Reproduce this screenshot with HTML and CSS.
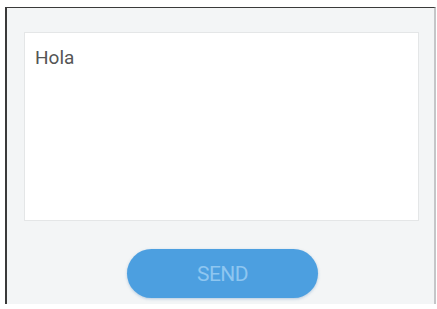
FILE: index.html
```html
<!DOCTYPE html>
<html>
<head>
<meta charset="utf-8">
<link rel="stylesheet" href="styles.css">
</head>
<body>
<div class="frame">
  <div class="message">Hola</div>
  <div class="actions">
    <button class="send">SEND</button>
  </div>
</div>
</body>
</html>
```
FILE: styles.css
```css
html, body {
  margin: 0;
  padding: 0;
  background: #ffffff;
}
body {
  font-family: Roboto, "Liberation Sans", sans-serif;
}
.frame {
  box-sizing: border-box;
  margin: 7px 0 0 5px;
  width: 431px;
  height: 297px;
  background: #f3f5f6;
  border-top: 1px solid #3a3a3a;
  border-left: 2px solid #3a3a3a;
  border-right: 2px solid #c4c6c8;
  padding: 24px 15px 0 17px;
  display: flex;
  flex-direction: column;
}
.message {
  box-sizing: border-box;
  height: 189px;
  background: #ffffff;
  border: 1px solid #e4e6e7;
  padding: 14px 10px;
  font-size: 19px;
  color: #555555;
  line-height: 22px;
}
.actions {
  display: flex;
  justify-content: center;
  padding-top: 28px;
  padding-left: 2px;
}
.send {
  width: 191px;
  height: 49px;
  border: none;
  border-radius: 25px;
  background: #4c9fe0;
  color: #8ec6f0;
  font-family: Roboto, "Liberation Sans", sans-serif;
  font-size: 21px;
  letter-spacing: -0.5px;
  box-shadow: 0 1px 3px rgba(60, 120, 180, 0.35);
  padding: 0;
}
```
